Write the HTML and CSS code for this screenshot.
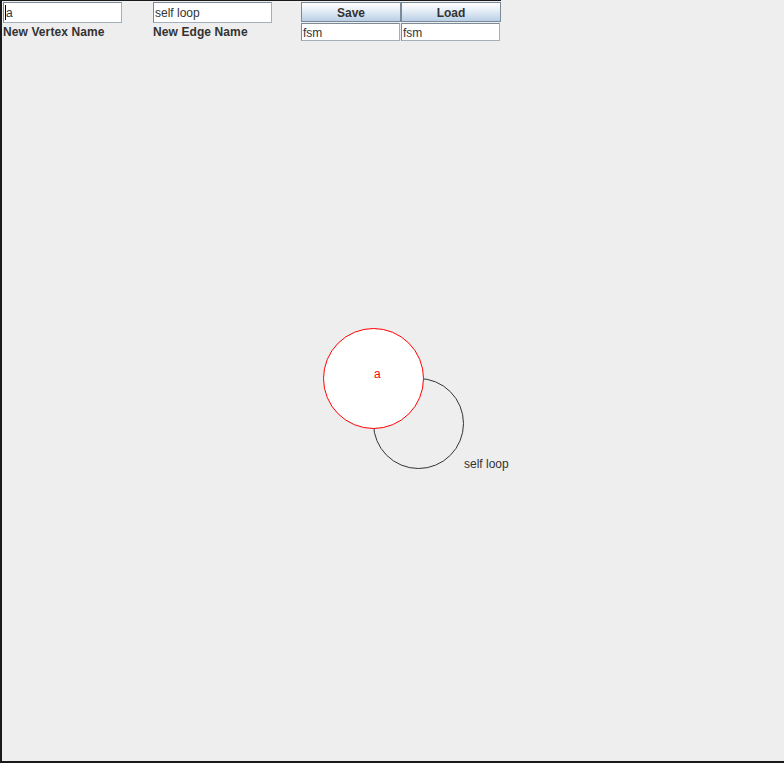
FILE: index.html
```html
<!DOCTYPE html>
<html>
<head>
<meta charset="utf-8">
<link rel="stylesheet" href="styles.css">
</head>
<body>
<div class="frame">
  <div class="toolbar">
    <div class="group vertex">
      <div class="field"><span class="caret"></span>a</div>
      <div class="label">New Vertex Name</div>
    </div>
    <div class="group edge">
      <div class="field">self loop</div>
      <div class="label">New Edge Name</div>
    </div>
    <div class="group file">
      <div class="button">Save</div>
      <div class="field small">fsm</div>
    </div>
    <div class="group file">
      <div class="button">Load</div>
      <div class="field small">fsm</div>
    </div>
  </div>
</div>
<svg class="canvas" width="784" height="763" viewBox="0 0 784 763">
  <circle cx="418.5" cy="423.5" r="45" fill="none" stroke="#333" stroke-width="1"/>
  <circle cx="373.5" cy="378.5" r="50" fill="#ffffff" stroke="#ff0000" stroke-width="1"/>
  <text x="374" y="378" class="vname">a</text>
  <text x="464" y="468" class="ename">self loop</text>
</svg>
</body>
</html>
```
FILE: styles.css
```css
html, body {
  margin: 0;
  padding: 0;
  background: #eeeeee;
}
body {
  width: 784px;
  height: 763px;
  position: relative;
  overflow: hidden;
  font-family: "Liberation Sans", Arial, sans-serif;
}
.frame {
  box-sizing: border-box;
  width: 784px;
  height: 763px;
  border-left: 2px solid #1a1a1a;
  border-bottom: 2px solid #1a1a1a;
  background: #eeeeee;
}
.toolbar {
  width: 498px;
  border-top: 1px solid #1a1a1a;
  padding: 1px 0 0 1px;
  display: flex;
  align-items: flex-start;
}
.group {
  display: flex;
  flex-direction: column;
}
.vertex { width: 119px; margin-right: 31px; }
.edge { width: 119px; margin-right: 29px; }
.file { width: 100px; }
.field {
  box-sizing: border-box;
  height: 21px;
  background: #ffffff;
  border: 1px solid #a3b0bc;
  border-top-color: #7a8a99;
  border-left-color: #7a8a99;
  font-size: 12px;
  line-height: 21px;
  color: #333333;
  padding-left: 1px;
  position: relative;
}
.caret {
  display: inline-block;
  width: 1px;
  height: 15px;
  background: #000;
  vertical-align: -3px;
  margin-right: 0;
}
.field.small {
  width: 99px;
  height: 18px;
  line-height: 19px;
  margin-top: 1px;
}
.label {
  font-size: 12px;
  font-weight: bold;
  color: #333333;
  line-height: 18px;
  letter-spacing: 0.1px;
}
.button {
  box-sizing: border-box;
  height: 20px;
  border: 1px solid #7a8a99;
  background: linear-gradient(to bottom, #ffffff 0%, #e8eff7 40%, #b8cfe5 100%);
  font-size: 12px;
  font-weight: bold;
  color: #333333;
  text-align: center;
  line-height: 20px;
}
.canvas {
  position: absolute;
  left: 0;
  top: 0;
  pointer-events: none;
}
.vname {
  font-family: "Liberation Sans", Arial, sans-serif;
  font-size: 12px;
  fill: #ff0000;
}
.ename {
  font-family: "Liberation Sans", Arial, sans-serif;
  font-size: 12px;
  fill: #333333;
}
```
